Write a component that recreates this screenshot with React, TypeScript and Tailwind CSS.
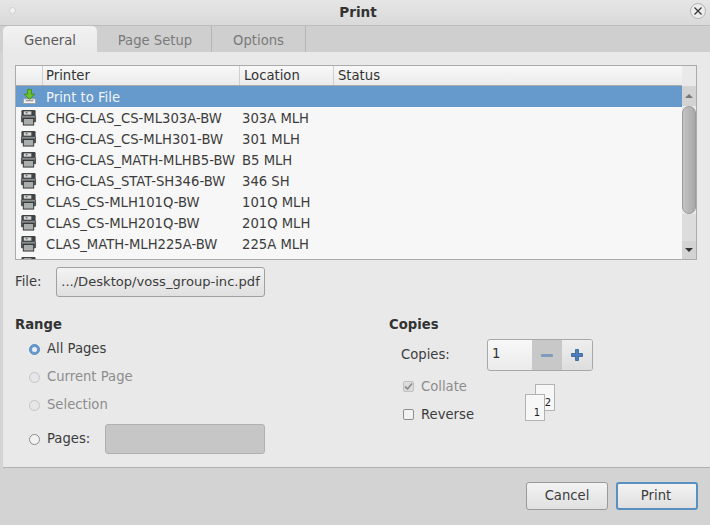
const printers = [
  ["CHG-CLAS_CS-ML303A-BW", "303A MLH"],
  ["CHG-CLAS_CS-MLH301-BW", "301 MLH"],
  ["CHG-CLAS_MATH-MLHB5-BW", "B5 MLH"],
  ["CHG-CLAS_STAT-SH346-BW", "346 SH"],
  ["CLAS_CS-MLH101Q-BW", "101Q MLH"],
  ["CLAS_CS-MLH201Q-BW", "201Q MLH"],
  ["CLAS_MATH-MLH225A-BW", "225A MLH"],
];

const PrinterIcon = () => (
  <svg width="17" height="17" viewBox="0 0 18 18" className="shrink-0">
    <rect x="1.5" y="1" width="15" height="9" rx="1.5" fill="#3f4344" />
    <rect x="4" y="2.5" width="8" height="3.5" fill="#d8d8d8" />
    <rect x="6" y="3.5" width="2" height="1" fill="#444" />
    <rect x="1" y="7" width="16" height="7" rx="1" fill="#55595a" />
    <rect x="2" y="7.5" width="14" height="1.5" fill="#8b8f90" />
    <rect x="3.5" y="10" width="11" height="7" fill="#a9adab" stroke="#333" strokeWidth="1" />
  </svg>
);

const DownloadIcon = () => (
  <svg width="17" height="17" viewBox="0 0 18 18" className="shrink-0">
    <rect x="2.5" y="11.5" width="13" height="5" rx="1" fill="#f2f2f2" stroke="#9a9a9a" />
    <rect x="5" y="13" width="8" height="1" fill="#777" />
    <path d="M7 1.500h4v5h3.500L9 12 3.500 6.500H7z" fill="#6cc32c" stroke="#3f8f12" strokeWidth="1" />
  </svg>
);

const Radio = ({ checked, disabled }: { checked?: boolean; disabled?: boolean }) => (
  <span
    className={`flex h-[11px] w-[11px] shrink-0 items-center justify-center rounded-full border ${
      checked ? "border-[#5b8fc4] bg-[#6699cc]" : disabled ? "border-[#c4c4c4] bg-[#e6e6e6]" : "border-[#8e8e8e] bg-[#f2f2f2]"
    }`}
  >
    {checked && <span className="h-[5px] w-[5px] rounded-full bg-[#e8eef5]" />}
  </span>
);

const RangeRow = ({ label, checked, disabled }: { label: string; checked?: boolean; disabled?: boolean }) => (
  <div className="flex h-[28px] items-center gap-[7px] pl-[14px]">
    <Radio checked={checked} disabled={disabled} />
    <span className={disabled ? "text-[#8d8d8d]" : "text-[#3c3c3c]"}>{label}</span>
  </div>
);

export default function App() {
  return (
    <div
      className="flex h-[525px] w-[710px] flex-col overflow-hidden bg-[#d3d3d3] text-[13.2px] text-[#3c3c3c]"
      style={{ fontFamily: '"DejaVu Sans", sans-serif' }}
    >
      {/* Title bar */}
      <div className="relative flex h-[26px] shrink-0 items-center justify-center border-b border-[#bdbdbd] bg-gradient-to-b from-[#e6e6e6] to-[#d9d9d9] pl-[6px]">
        <span className="absolute left-[9px] top-[7px] h-[7px] w-[7px] rounded-full border border-[#d0d0d0] bg-[#f1f1f1]" />
        <span className="text-[13.6px] font-bold text-[#333333]">Print</span>
        <span className="absolute right-[4px] top-[3px] flex h-[16px] w-[16px] items-center justify-center rounded-full border border-[#b5b5b5] bg-[#ededed]">
          <svg width="8" height="8" viewBox="0 0 8 8">
            <path d="M0.500 0.500l7 7M7.500 0.500l-7 7" stroke="#333" strokeWidth="1.200" />
          </svg>
        </span>
      </div>

      {/* Tabs */}
      <div className="flex h-[26px] shrink-0 bg-[#cfcfcf] pl-[3px] leading-[30px]">
        <div className="w-[94px] rounded-t-[5px] bg-gradient-to-b from-[#f2f2f2] to-[#e9e9e9] text-center text-[#5a5a5a]">
          General
        </div>
        <div className="w-[115px] border-r border-[#b5b5b5] pl-[2px] text-center text-[#7a7a7a]">Page Setup</div>
        <div className="w-[94px] border-r border-[#b5b5b5] text-center text-[#7a7a7a]">Options</div>
      </div>

      {/* Panel */}
      <div className="ml-[3px] flex h-[416px] shrink-0 flex-col border-b border-[#b0b0b0] bg-[#e9e9e9] pl-[12px] pr-[13px] pt-[13px]">
        {/* Printer list */}
        <div className="flex h-[195px] shrink-0 border border-[#ababab] bg-[#f7f7f7]">
          <div className="min-w-0 flex-1 overflow-hidden">
            <div className="flex h-[20px] border-b border-[#ababab] bg-gradient-to-b from-[#f8f8f8] to-[#ebebeb] leading-[19px] text-[#333333]">
              <div className="w-[27px] border-r border-[#cfcfcf]" />
              <div className="w-[197px] border-r border-[#cfcfcf] pl-[3px]">Printer</div>
              <div className="w-[94px] border-r border-[#cfcfcf] pl-[4px]">Location</div>
              <div className="pl-[4px]">Status</div>
            </div>
            <div className="flex h-[21px] items-center bg-[#6699cc] text-[#f2f5f8]">
              <div className="w-[30px] pl-[5px]">
                <DownloadIcon />
              </div>
              <span className="pt-[2px]">Print to File</span>
            </div>
            {printers.map(([name, location]) => (
              <div key={name} className="flex h-[21px] items-center whitespace-nowrap">
                <div className="w-[30px] pl-[4px]">
                  <PrinterIcon />
                </div>
                <span className="w-[196px] pt-[2px]">{name}</span>
                <span className="pt-[2px]">{location}</span>
              </div>
            ))}
            <div className="flex h-[21px] items-center">
              <div className="w-[30px] pl-[4px]">
                <PrinterIcon />
              </div>
            </div>
          </div>
          {/* Scrollbar */}
          <div className="flex w-[14px] shrink-0 flex-col bg-[#e9e9e9]">
            <div className="h-[20px]" />
            <div className="flex h-[20px] items-center justify-center bg-[#d3d3d3]">
              <span className="h-0 w-0 border-x-[4px] border-b-[4px] border-x-transparent border-b-[#777777]" />
            </div>
            <div className="h-[108px] rounded-[7px] border border-[#9a9a9a] bg-gradient-to-r from-[#c4c4c4] to-[#a8a8a8]" />
            <div className="flex-1 bg-[#dcdcdc]" />
            <div className="flex h-[18px] items-center justify-center bg-[#d3d3d3]">
              <span className="h-0 w-0 border-x-[4px] border-t-[4px] border-x-transparent border-t-[#333333]" />
            </div>
          </div>
        </div>

        {/* File chooser */}
        <div className="mt-[7px] flex h-[30px] shrink-0 items-center">
          <span className="w-[41px]">File:</span>
          <button className="h-[30px] w-[209px] whitespace-nowrap rounded-[3px] border border-[#a0a0a0] bg-gradient-to-b from-[#f3f3f3] to-[#e0e0e0] text-[13.1px] text-[#3c3c3c]">
            .../Desktop/voss_group-inc.pdf
          </button>
        </div>

        <div className="mt-[19px] flex">
          {/* Range */}
          <div className="w-[374px]">
            <div className="h-[19px] font-bold leading-[18px] text-[#333333]">Range</div>
            <RangeRow label="All Pages" checked />
            <RangeRow label="Current Page" disabled />
            <RangeRow label="Selection" disabled />
            <div className="mt-[5px] flex h-[30px] items-center pl-[14px]">
              <Radio />
              <span className="ml-[7px] w-[58px] pb-[1px]">Pages:</span>
              <div className="h-[30px] w-[160px] rounded-[3px] border border-[#b0b0b0] bg-[#c6c6c6]" />
            </div>
          </div>

          {/* Copies */}
          <div className="flex-1">
            <div className="h-[23px] font-bold leading-[18px] text-[#333333]">Copies</div>
            <div className="flex h-[32px] items-center pl-[12px]">
              <span className="w-[86px]">Copies:</span>
              <div className="flex h-[32px] w-[106px] overflow-hidden rounded-[3px] border border-[#a8a8a8] bg-gradient-to-b from-[#f8f8f8] to-[#ebebeb]">
                <span className="w-[44px] pl-[4px] leading-[28px] text-[#333333]">1</span>
                <span className="flex w-[30px] items-center justify-center bg-[#c8c8c8]">
                  <span className="h-[3px] w-[12px] rounded-[1px] bg-[#7f9cc0]" />
                </span>
                <span className="flex flex-1 items-center justify-center bg-gradient-to-b from-[#eeeeee] to-[#dedede]">
                  <svg width="12" height="12" viewBox="0 0 12 12">
                    <path d="M4.500 0.500h3v4h4v3h-4v4h-3v-4h-4v-3h4z" fill="#4c7fb8" stroke="#2f5f97" strokeWidth="0.800" />
                  </svg>
                </span>
              </div>
            </div>
            <div className="relative pl-[14px] pt-[1px]">
              <div className="flex h-[28px] items-center gap-[7px] text-[#8d8d8d]">
                <span className="flex h-[11px] w-[11px] items-center justify-center rounded-[2px] border border-[#c0c0c0] bg-[#dcdcdc]">
                  <svg width="9" height="9" viewBox="0 0 9 9">
                    <path d="M1 4.500l2.500 2.500L8 1.500" fill="none" stroke="#8f8f8f" strokeWidth="1.800" />
                  </svg>
                </span>
                <span className="pt-[2px]">Collate</span>
              </div>
              <div className="flex h-[28px] items-center gap-[7px]">
                <span className="h-[11px] w-[11px] rounded-[2px] border border-[#8e8e8e] bg-[#f2f2f2]" />
                <span className="pt-[2px]">Reverse</span>
              </div>
              {/* Collate preview pages */}
              <div className="absolute left-[146px] top-[13px] flex h-[27px] w-[20px] items-end justify-end border border-[#b3b3b3] bg-[#f7f7f7] pr-[3px] text-[10px] leading-[15px] text-[#222222]">
                2
              </div>
              <div className="absolute left-[136px] top-[23px] flex h-[27px] w-[20px] items-end justify-end border border-[#b3b3b3] bg-[#f7f7f7] pr-[4px] text-[10px] leading-[15px] text-[#222222]">
                1
              </div>
            </div>
          </div>
        </div>
      </div>

      {/* Action buttons */}
      <div className="flex flex-1 items-start justify-end gap-[8px] pr-[12px] pt-[14px]">
        <button className="h-[28px] w-[82px] rounded-[3px] border border-[#9a9a9a] bg-gradient-to-b from-[#f3f3f3] to-[#e0e0e0] text-[#3c3c3c]">
          Cancel
        </button>
        <button className="h-[28px] w-[82px] rounded-[3px] border-2 border-[#5a8fc2] bg-gradient-to-b from-[#f3f3f3] to-[#e0e0e0] pr-[2px] text-[#3c3c3c]">
          Print
        </button>
      </div>
    </div>
  );
}
